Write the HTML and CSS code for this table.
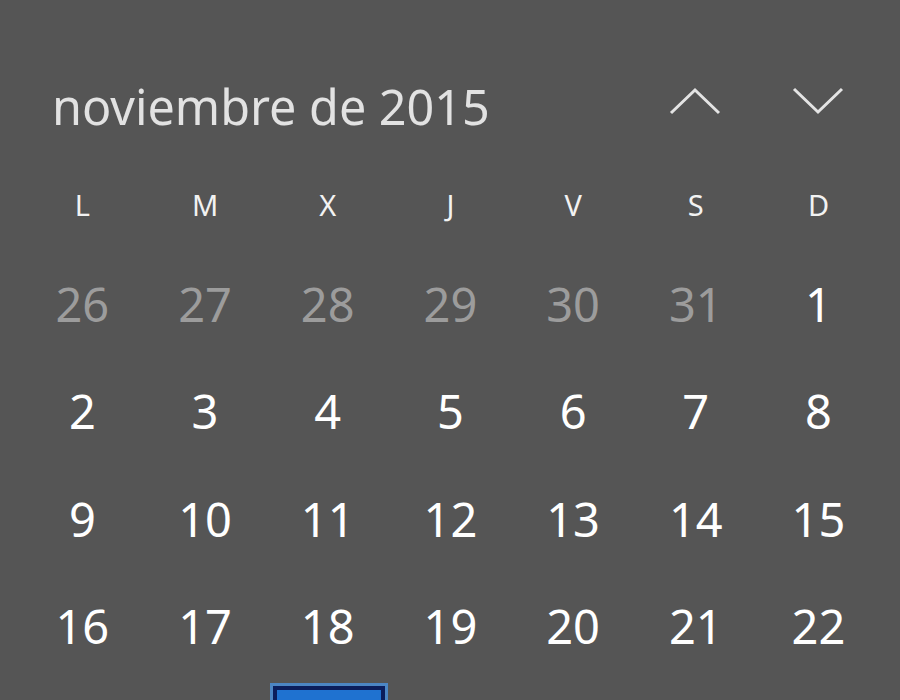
FILE: index.html
```html
<!DOCTYPE html>
<html lang="es">
<head>
<meta charset="utf-8">
<title>Calendario</title>
<link rel="stylesheet" href="styles.css">
</head>
<body>
<div class="calendar">
  <div class="header">
    <div class="title">noviembre de 2015</div>
    <div class="nav">
      <button class="nav-btn" aria-label="Anterior">
        <svg width="52" height="28" viewBox="0 0 52 28"><polyline points="2,26 26,3 50,26" fill="none" stroke="#e4e4e4" stroke-width="3"/></svg>
      </button>
      <button class="nav-btn" aria-label="Siguiente">
        <svg width="52" height="28" viewBox="0 0 52 28"><polyline points="2,2 26,25 50,2" fill="none" stroke="#e4e4e4" stroke-width="3"/></svg>
      </button>
    </div>
  </div>
  <div class="weekdays">
    <div>L</div><div>M</div><div>X</div><div>J</div><div>V</div><div>S</div><div>D</div>
  </div>
  <div class="days">
    <div class="day other">26</div><div class="day other">27</div><div class="day other">28</div><div class="day other">29</div><div class="day other">30</div><div class="day other">31</div><div class="day">1</div>
    <div class="day">2</div><div class="day">3</div><div class="day">4</div><div class="day">5</div><div class="day">6</div><div class="day">7</div><div class="day">8</div>
    <div class="day">9</div><div class="day">10</div><div class="day">11</div><div class="day">12</div><div class="day">13</div><div class="day">14</div><div class="day">15</div>
    <div class="day">16</div><div class="day">17</div><div class="day">18</div><div class="day">19</div><div class="day">20</div><div class="day">21</div><div class="day">22</div>
    <div class="day"></div><div class="day"></div><div class="day today"><span class="today-box"></span></div><div class="day"></div><div class="day"></div><div class="day"></div><div class="day"></div>
  </div>
</div>
</body>
</html>
```

FILE: styles.css
```css
html, body {
  margin: 0;
  padding: 0;
  background: #555555;
  height: 100%;
  overflow: hidden;
}

.calendar {
  width: 900px;
  font-family: "Noto Sans", "Open Sans", sans-serif;
  color: #f4f4f4;
}

.header {
  height: 158px;
  display: flex;
  align-items: flex-start;
  justify-content: space-between;
  padding: 0 56px 0 52px;
  box-sizing: border-box;
}

.title {
  font-size: 48.5px;
  color: #e2e2e2;
  margin-top: 77px;
  line-height: 1.2;
}

.nav {
  display: flex;
  gap: 71px;
  margin-top: 87px;
}

.nav-btn {
  background: none;
  border: 0;
  padding: 0;
  width: 52px;
  height: 28px;
  display: block;
}

.nav-btn svg {
  display: block;
}

.weekdays,
.days {
  display: grid;
  grid-template-columns: repeat(7, 122.7px);
  padding-left: 21px;
}

.weekdays {
  height: 92px;
  align-items: center;
  font-size: 29px;
  color: #f2f2f2;
}

.weekdays div {
  text-align: center;
}

.days {
  grid-auto-rows: 107.5px;
}

.day {
  display: flex;
  align-items: center;
  justify-content: center;
  font-size: 47px;
  color: #ffffff;
}

.day.other {
  color: #9c9c9c;
}

.today {
  padding: 6px 4px 0 7px;
  box-sizing: border-box;
}

.today-box {
  flex: 1;
  align-self: stretch;
  background: #1f72d0;
  border: 4px solid #0b1e5c;
  box-shadow: 0 0 0 3px #4c86c4;
}
```
